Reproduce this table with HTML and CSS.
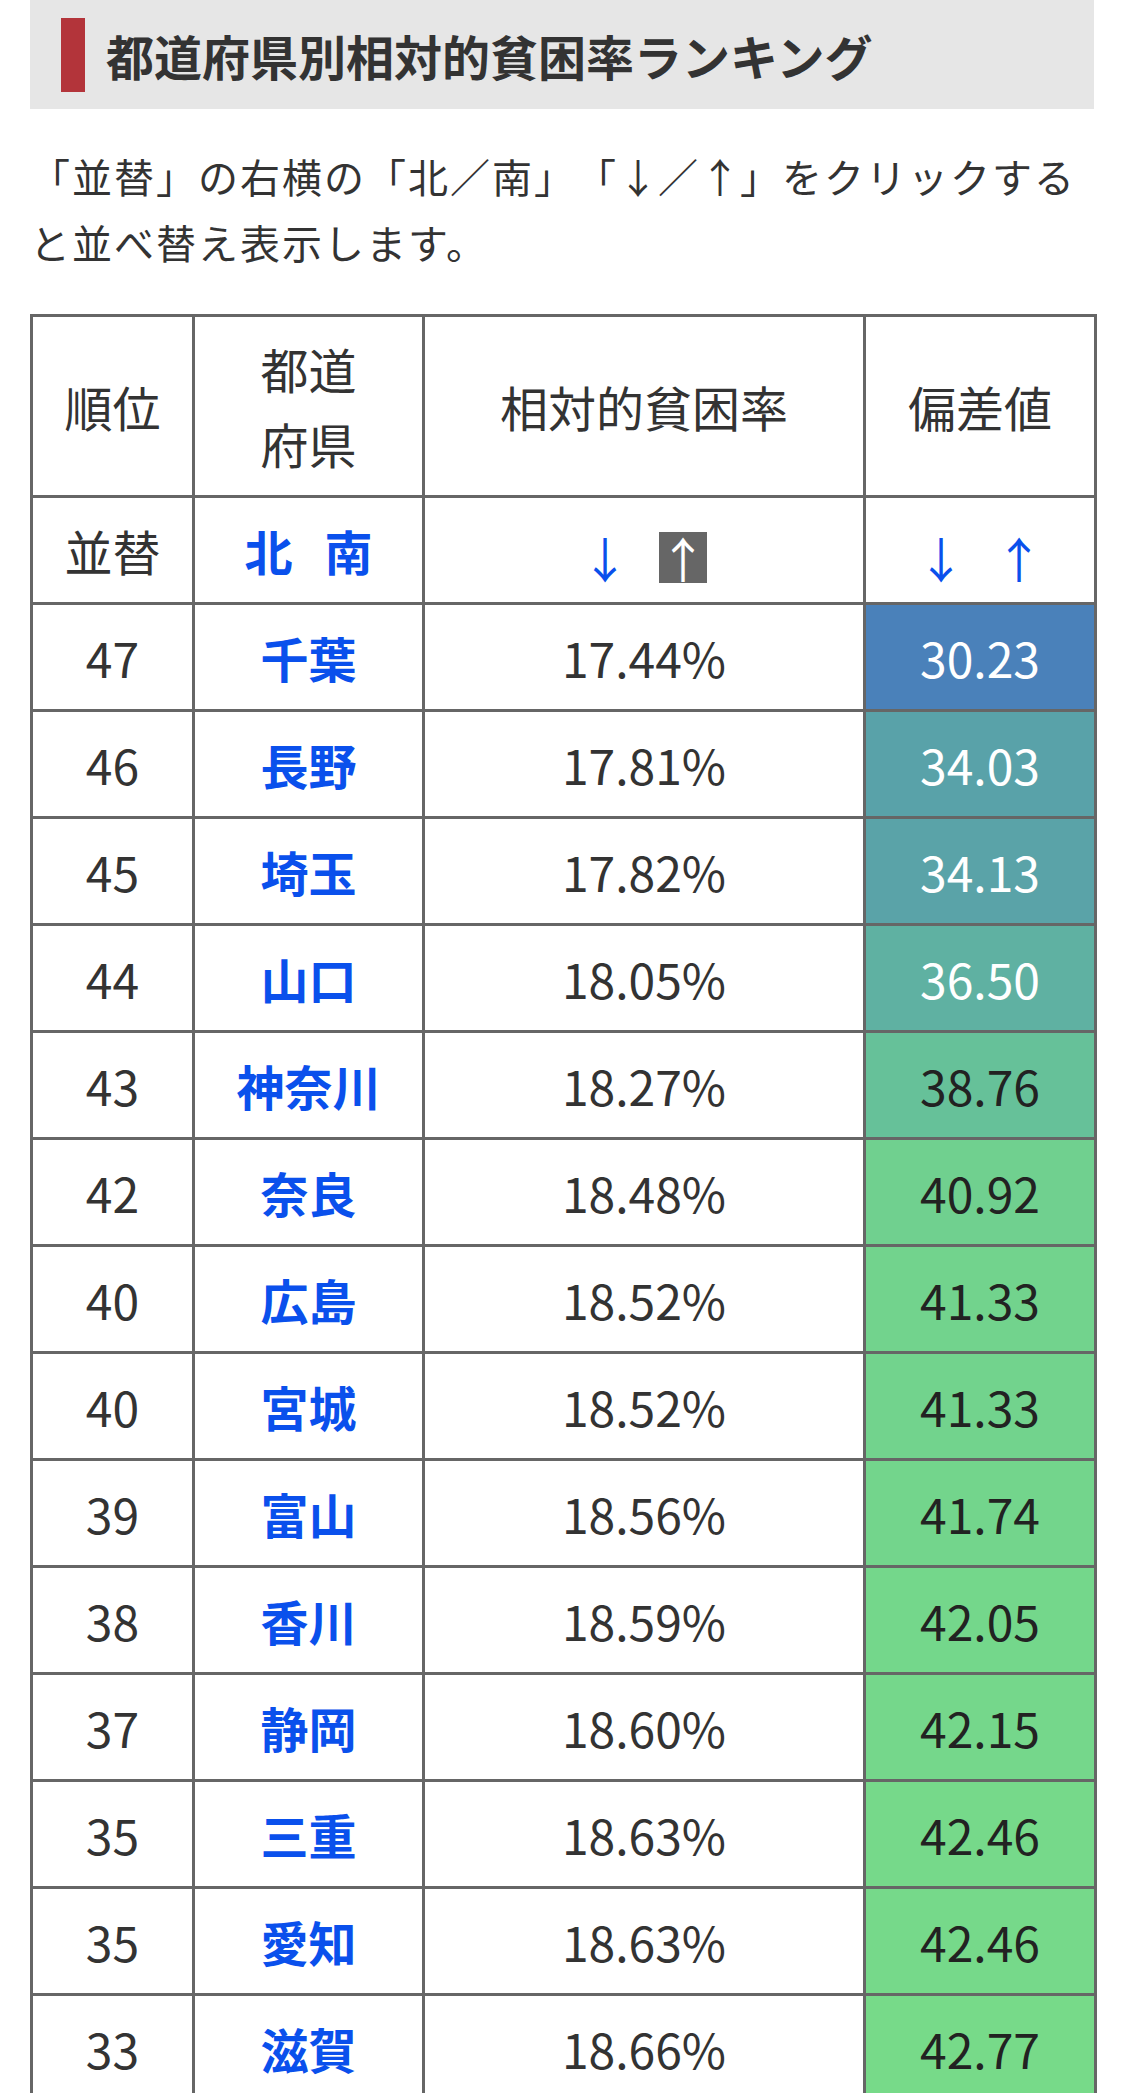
FILE: index.html
```html
<!DOCTYPE html>
<html lang="ja">
<head>
    <meta charset="UTF-8">
    <meta name="viewport" content="width=device-width, initial-scale=1.0">
    <title>都道府県別相対的貧困率ランキング</title>
    <link rel="stylesheet" href="styles.css">
</head>
<body>
    <div class="page">
        <h2 class="section-title">都道府県別相対的貧困率ランキング</h2>
        <p class="note">「並替」の右横の「北／南」「<span class="fw">↓</span>／<span class="fw">↑</span>」をクリックする<br>と並べ替え表示します。</p>
        <table class="rank">
            <colgroup>
                <col class="c-rank">
                <col class="c-pref">
                <col class="c-rate">
                <col class="c-dev">
            </colgroup>
            <thead>
                <tr class="head-row">
                    <th>順位</th>
                    <th>都道<br>府県</th>
                    <th>相対的貧困率</th>
                    <th>偏差値</th>
                </tr>
                <tr class="sort-row">
                    <th>並替</th>
                    <th><a class="dir" href="#">北</a><a class="dir" href="#">南</a></th>
                    <th><a class="arrow" href="#">↓</a><a class="arrow active" href="#">↑</a></th>
                    <th><a class="arrow" href="#">↓</a><a class="arrow" href="#">↑</a></th>
                </tr>
            </thead>
            <tbody>
                <tr><td>47</td><td class="pref"><a href="#">千葉</a></td><td>17.44%</td><td class="dev light" style="background:#4a81ba">30.23</td></tr>
                <tr><td>46</td><td class="pref"><a href="#">長野</a></td><td>17.81%</td><td class="dev light" style="background:#59a2a9">34.03</td></tr>
                <tr><td>45</td><td class="pref"><a href="#">埼玉</a></td><td>17.82%</td><td class="dev light" style="background:#5aa3a8">34.13</td></tr>
                <tr><td>44</td><td class="pref"><a href="#">山口</a></td><td>18.05%</td><td class="dev light" style="background:#5fb1a2">36.50</td></tr>
                <tr><td>43</td><td class="pref"><a href="#">神奈川</a></td><td>18.27%</td><td class="dev" style="background:#66c199">38.76</td></tr>
                <tr><td>42</td><td class="pref"><a href="#">奈良</a></td><td>18.48%</td><td class="dev" style="background:#70d08f">40.92</td></tr>
                <tr><td>40</td><td class="pref"><a href="#">広島</a></td><td>18.52%</td><td class="dev" style="background:#72d38d">41.33</td></tr>
                <tr><td>40</td><td class="pref"><a href="#">宮城</a></td><td>18.52%</td><td class="dev" style="background:#72d38d">41.33</td></tr>
                <tr><td>39</td><td class="pref"><a href="#">富山</a></td><td>18.56%</td><td class="dev" style="background:#73d58c">41.74</td></tr>
                <tr><td>38</td><td class="pref"><a href="#">香川</a></td><td>18.59%</td><td class="dev" style="background:#74d78b">42.05</td></tr>
                <tr><td>37</td><td class="pref"><a href="#">静岡</a></td><td>18.60%</td><td class="dev" style="background:#75d78b">42.15</td></tr>
                <tr><td>35</td><td class="pref"><a href="#">三重</a></td><td>18.63%</td><td class="dev" style="background:#76d98a">42.46</td></tr>
                <tr><td>35</td><td class="pref"><a href="#">愛知</a></td><td>18.63%</td><td class="dev" style="background:#76d98a">42.46</td></tr>
                <tr><td>33</td><td class="pref"><a href="#">滋賀</a></td><td>18.66%</td><td class="dev" style="background:#77da89">42.77</td></tr>
            </tbody>
        </table>
    </div>
</body>
</html>
```

FILE: styles.css
```css
:root { --text: #333; --link: #0a50ec; --line: #666; }
body { margin: 0; font-family: "Noto Sans CJK JP", "Noto Sans", sans-serif; color: var(--text); background: #fff; text-spacing-trim: space-all; }
.page { width: 1064px; margin-left: 30px; }
.section-title { display: flex; align-items: center; gap: 21px; height: 109px; margin: 0; padding-left: 31px; background: #e6e6e6; font-size: 48px; font-weight: bold; color: #333; }
.section-title::before { content: ""; width: 24px; height: 74px; background: #b3343a; }
.note { margin: 34px 0 39px; font-size: 40px; line-height: 66px; letter-spacing: 2px; white-space: nowrap; }
.fw { display: inline-block; width: 1em; text-align: center; }
.rank { width: 1064px; border-collapse: collapse; table-layout: fixed; text-align: center; }
.c-rank { width: 162px; }
.c-pref { width: 230px; }
.c-rate { width: 441px; }
.c-dev { width: 231px; }
.rank th, .rank td { border: 3px solid var(--line); padding: 0; font-size: 48px; font-weight: normal; }
.rank a { color: var(--link); text-decoration: none; }
.head-row th { height: 178px; line-height: 75px; }
.sort-row th, .rank td { height: 104px; }
.dir { font-weight: bold; margin: 0 16px; }
.arrow { display: inline-block; width: 48px; height: 51px; line-height: 51px; margin: 0 15px; vertical-align: middle; }
.arrow.active { background: var(--line); color: #fff !important; }
.pref a { font-weight: bold; }
.dev { color: #222; }
.dev.light { color: #fff; }
```
